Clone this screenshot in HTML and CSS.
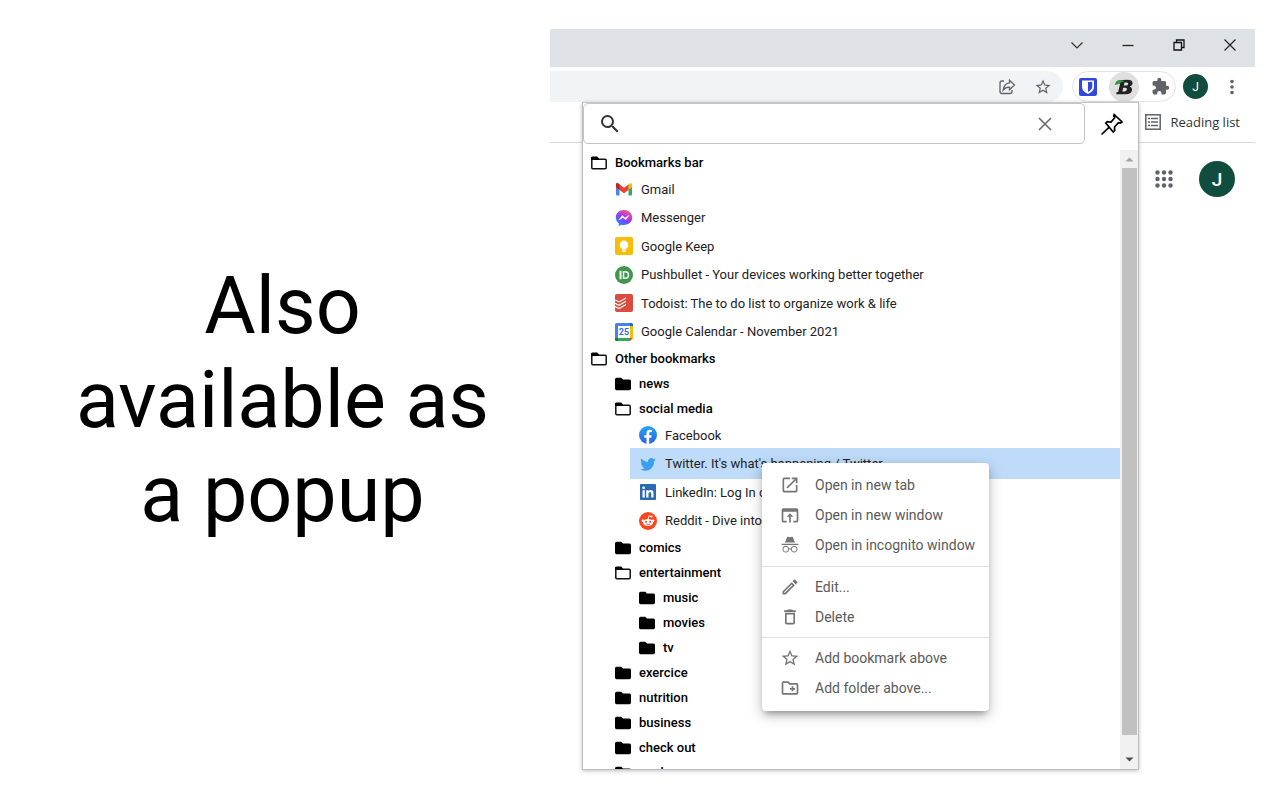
FILE: index.html
```html
<!DOCTYPE html>
<html lang="en">
<head>
<meta charset="utf-8">
<title>Bookmarks popup</title>
<link rel="stylesheet" href="styles.css">
</head>
<body>
<svg class="defs" aria-hidden="true">
  <defs>
    <symbol id="folder-open" viewBox="0 0 16 14"><path d="M1.8 3.2h12.4q1 0 1 1v7.6q0 1-1 1H1.8q-1 0-1-1V2.400z" fill="none" stroke="#111" stroke-width="1.500"/><path d="M.1 3.900V2Q.1.500 1.600.500h4.600L8 2.500v1.400z" fill="#000"/></symbol>
    <symbol id="folder" viewBox="0 0 16 14"><path d="M1.600.800h4.700L8 2.400h6.400q1.600 0 1.600 1.600v7.600q0 1.600-1.600 1.600H1.600Q0 13.200 0 11.600V2.400Q0 .800 1.600.800z"/></symbol>
    <symbol id="star" viewBox="0 0 24 24"><path d="M22 9.240l-7.190-.620L12 2 9.190 8.630 2 9.240l5.460 4.730L5.820 21 12 17.270 18.180 21l-1.630-7.030L22 9.240zM12 15.400l-3.760 2.270 1-4.280-3.320-2.880 4.380-.380L12 6.100l1.710 4.040 4.380.380-3.320 2.880 1 4.280L12 15.400z"/></symbol>
  </defs>
</svg>
<main class="stage">
  <h1 class="headline">Also<br>available as<br>a popup</h1>
  <section class="browser">
    <header class="titlebar">
      <button class="win-btn" aria-label="Search tabs"><svg width="14" height="14" viewBox="0 0 14 14"><path d="M1.500 4.500 7 10l5.500-5.500" fill="none" stroke="#333" stroke-width="1.200"/></svg></button>
      <button class="win-btn" aria-label="Minimize"><svg width="14" height="14" viewBox="0 0 14 14"><path d="M1.500 7.500h11" stroke="#222" stroke-width="1.300"/></svg></button>
      <button class="win-btn" aria-label="Restore"><svg width="14" height="14" viewBox="0 0 14 14"><path d="M2 4.500h7.500V12H2zM4.500 4.500V2H12v7.500H9.500" fill="none" stroke="#111" stroke-width="1.300"/></svg></button>
      <button class="win-btn" aria-label="Close"><svg width="14" height="14" viewBox="0 0 14 14"><path d="m1.500 1.500 11 11m0-11-11 11" stroke="#222" stroke-width="1.200"/></svg></button>
    </header>
    <div class="toolbar">
      <div class="omnibox">
        <button class="icon-btn" aria-label="Share"><svg width="18" height="18" viewBox="0 0 18 18" fill="none" stroke="#5f6368" stroke-width="1.300"><path d="M6 3H4Q2 3 2 5v8.500q0 2 2 2h8q2 0 2-2V12"/><path d="M11.500 2.300 16.500 7l-5 4.700V9.200Q7.500 9 5.200 12 6 5.300 11.500 4.800z"/></svg></button>
        <button class="icon-btn" aria-label="Bookmark this tab"><svg width="18" height="18" fill="#5f6368"><use href="#star"/></svg></button>
      </div>
      <div class="extensions">
        <button class="ext" aria-label="Password manager"><svg width="18" height="18" viewBox="0 0 18 18"><rect width="18" height="18" rx="2" fill="#3148e0"/><path d="M3 2.500h12V9q0 4-6 7-6-3-6-7z" fill="#fff"/><path d="M9 4h4.200v5q0 2.700-4.200 5z" fill="#3148e0"/></svg></button>
        <button class="ext ext-active" aria-label="Bookmarks extension"><svg width="20" height="16" viewBox="0 0 20 16"><path d="M4.500 2.200Q8 .8 13 .8q5.600 0 5.600 3.400 0 2.500-2.800 3.500 2.600.8 2.200 3.600-.6 3.900-6.500 3.900H2.200l.5-2.200h1.500L6 5z" fill="#222"/><path d="M10.500 3.500h2.200q1.800 0 1.500 1.500-.3 1.600-2.300 1.600H9.800zM9.200 8.800h2.200q1.800 0 1.500 1.700-.3 1.900-2.500 1.900H8.400z" fill="#dfdfdf"/><path d="M.8 6Q1.500 1 6 .9q3-.1 5 1.600-2.600-.2-4.500 1.400T.8 6z" fill="#3a9347"/></svg></button>
        <button class="ext" aria-label="Extensions"><svg width="19" height="19" viewBox="0 0 24 24" fill="#5f6368"><path d="M20.500 11H19V7c0-1.100-.9-2-2-2h-4V3.500a2.500 2.500 0 0 0-5 0V5H4c-1.100 0-2 .9-2 2v3.800h1.500a2.700 2.700 0 0 1 0 5.400H2V20c0 1.100.9 2 2 2h3.800v-1.500a2.700 2.700 0 0 1 5.400 0V22H17c1.100 0 2-.9 2-2v-4h1.500a2.500 2.500 0 0 0 0-5z"/></svg></button>
      </div>
      <button class="avatar avatar-small" aria-label="Profile">J</button>
      <button class="icon-btn more" aria-label="Menu"><svg width="6" height="18" viewBox="0 0 6 18" fill="#5f6368"><circle cx="3" cy="3.500" r="1.800"/><circle cx="3" cy="9" r="1.800"/><circle cx="3" cy="14.500" r="1.800"/></svg></button>
    </div>
    <div class="bookmark-bar">
      <button class="reading"><svg width="16" height="16" viewBox="0 0 16 16"><rect x=".8" y=".8" width="14.400" height="14.400" fill="none" stroke="#5f6368" stroke-width="1.500"/><path d="M3 4.500h2m1 0h7M3 8h2m1 0h7M3 11.500h2m1 0h7" stroke="#5f6368" stroke-width="1.600"/></svg>Reading list</button>
    </div>
    <div class="page">
      <button class="icon-btn" aria-label="Google apps"><svg width="20" height="20" viewBox="0 0 20 20" fill="#5f6368"><circle cx="3.500" cy="3.500" r="2.200"/><circle cx="10" cy="3.500" r="2.200"/><circle cx="16.500" cy="3.500" r="2.200"/><circle cx="3.500" cy="10" r="2.200"/><circle cx="10" cy="10" r="2.200"/><circle cx="16.500" cy="10" r="2.200"/><circle cx="3.500" cy="16.500" r="2.200"/><circle cx="10" cy="16.500" r="2.200"/><circle cx="16.500" cy="16.500" r="2.200"/></svg></button>
      <button class="avatar avatar-large" aria-label="Account">J</button>
    </div>

    <div class="popup">
      <div class="search-row">
        <div class="search-box">
          <svg width="24" height="24" viewBox="0 0 24 24" fill="#333"><path d="M15.500 14h-.790l-.280-.270A6.470 6.470 0 0 0 16 9.500 6.500 6.500 0 1 0 9.500 16c1.610 0 3.090-.590 4.230-1.570l.270.280v.790l5 4.990L20.490 19l-4.990-5zm-6 0a4.500 4.500 0 1 1 0-9 4.500 4.500 0 0 1 0 9z"/></svg>
          <input class="search" type="text" aria-label="Search bookmarks">
          <button class="icon-btn" aria-label="Clear"><svg width="14" height="14" viewBox="0 0 14 14"><path d="m1 1 12 12m0-12L1 13" stroke="#666" stroke-width="1.500"/></svg></button>
        </div>
        <button class="icon-btn pin" aria-label="Pin"><svg width="24" height="24" viewBox="0 0 24 24" fill="none" stroke="#000" stroke-width="1.700"><path d="M14.200 2.500 22 10l-1.500 1-2-.3-4 4.300.2 3.500-1.500 1.500L5.800 11l1.500-1.300 3.700.300 3.700-4.300-1-1.800zM9 15.300 1.500 22.500"/></svg></button>
      </div>
      <div class="list">
        <ul class="tree">
          <li><button class="folder"><svg width="16" height="14"><use href="#folder-open"/></svg>Bookmarks bar</button>
            <ul class="tree nested">
              <li><a class="bookmark" href="#"><svg width="18" height="18" viewBox="0 0 18 18"><path d="M1 4.500h3.500v11H2q-1 0-1-1z" fill="#4a86f0"/><path d="M13.500 4.500H17v10q0 1-1 1h-2.500z" fill="#34a853"/><path d="M13.500 4.500 15 3.300q2-.8 2 1.500v2.400l-3.500 2.700z" fill="#fbbc04"/><path d="M1 4.800Q1 2.500 3 3.300l6 4.500 4.500-3.300v5.400L9 13.200l-4.500-3.300L1 7.200z" fill="#e84335"/><path d="M1 4.800Q1 2.500 3 3.300l1.500 1.200v5.400L1 7.200z" fill="#c5221f"/></svg>Gmail</a></li>
              <li><a class="bookmark" href="#"><svg width="18" height="18" viewBox="0 0 18 18"><defs><linearGradient id="mg" x1=".2" y1="1" x2=".8" y2="0"><stop stop-color="#0a94ff"/><stop offset=".5" stop-color="#9a35ff"/><stop offset="1" stop-color="#ff5f75"/></linearGradient></defs><path d="M9 1c4.800 0 8.200 3.300 8.200 7.600S13.800 16 9 16q-1.300 0-2.500-.3L3.800 17v-2.600Q.8 12.200.8 8.600C.8 4.300 4.200 1 9 1z" fill="url(#mg)"/><path d="m4.200 10.800 3-4.200L10 9l3.800-2.500-3 4.200L8 8.500z" fill="#fff" stroke="#fff" stroke-width=".6"/></svg>Messenger</a></li>
              <li><a class="bookmark" href="#"><svg width="18" height="18" viewBox="0 0 18 18"><rect width="18" height="18" rx="2" fill="#fbbc04"/><circle cx="9" cy="8" r="4.400" fill="#fff"/><path d="M7 11h4v1.500H7zM7 13.300h4v1.400H7z" fill="#fff"/></svg>Google Keep</a></li>
              <li><a class="bookmark" href="#"><svg width="18" height="18" viewBox="0 0 18 18"><circle cx="9" cy="9" r="9" fill="#3f9849"/><path d="M4.500 4.800h2v8.400h-2z" fill="#fff"/><path d="M8.500 5.700h1.700a3.300 3.300 0 0 1 0 6.600H8.500z" fill="none" stroke="#fff" stroke-width="1.500"/></svg>Pushbullet - Your devices working better together</a></li>
              <li><a class="bookmark" href="#"><svg width="18" height="18" viewBox="0 0 18 18"><rect width="18" height="18" rx="2" fill="#db4c3f"/><path d="m0 6 4 2 7-4M0 9.300l4 2 7-4M0 12.600l4 2 7-4" fill="none" stroke="#fff" stroke-width="1.100"/></svg>Todoist: The to do list to organize work &amp; life</a></li>
              <li><a class="bookmark" href="#"><svg width="18" height="18" viewBox="0 0 18 18"><path d="M0 1.500Q0 0 1.500 0H15v3H3v12H0z" fill="#4a80ee"/><path d="M15 0h1.500Q18 0 18 1.500V3h-3z" fill="#1967d2"/><path d="M15 3h3v12h-3z" fill="#fbbc04"/><path d="M3 15h12v3H3z" fill="#34a853"/><path d="M0 15h3v3H1.500Q0 18 0 16.500z" fill="#188038"/><path d="M15 15h3l-3 3z" fill="#ea4335"/><path d="M3 3h12v12H3z" fill="#fff"/><text x="9" y="12" text-anchor="middle" class="cal-day">25</text></svg>Google Calendar - November 2021</a></li>
            </ul>
          </li>
          <li><button class="folder"><svg width="16" height="14"><use href="#folder-open"/></svg>Other bookmarks</button>
            <ul class="tree nested">
              <li><button class="folder"><svg width="16" height="14"><use href="#folder"/></svg>news</button></li>
              <li><button class="folder"><svg width="16" height="14"><use href="#folder-open"/></svg>social media</button>
                <ul class="tree nested">
                  <li><a class="bookmark" href="#"><svg width="18" height="18" viewBox="0 0 18 18"><defs><linearGradient id="fg" x2="0" y2="1"><stop stop-color="#2aa4f4"/><stop offset="1" stop-color="#2962e8"/></linearGradient></defs><circle cx="9" cy="9" r="9" fill="url(#fg)"/><path d="M7.500 18v-6.200H5.300V9.200h2.200V7.300q0-3.600 3.400-3.600l1.900.2v2.200h-1.100q-1.500 0-1.500 1.400v1.700h2.500l-.5 2.600h-2V18z" fill="#fff"/></svg>Facebook</a></li>
                  <li><a class="bookmark selected" href="#"><svg width="18" height="18" viewBox="0 0 24 24" fill="#3d9df0"><path d="M22.460 6c-.770.350-1.600.580-2.460.690.880-.530 1.560-1.370 1.880-2.380-.830.500-1.750.850-2.720 1.050A4.260 4.260 0 0 0 12 9.240C8.280 9.090 5.110 7.380 3 4.790c-.370.630-.580 1.370-.580 2.150 0 1.490.750 2.810 1.910 3.560-.710 0-1.370-.200-1.950-.500a4.300 4.300 0 0 0 3.440 4.240 4.220 4.220 0 0 1-1.930.070 4.280 4.280 0 0 0 4 2.980A8.520 8.520 0 0 1 1.500 19.050 12.060 12.060 0 0 0 8.120 21c7.780 0 12.230-6.560 11.990-12.400A8.360 8.360 0 0 0 22.460 6z"/></svg>Twitter. It's what's happening / Twitter</a></li>
                  <li><a class="bookmark" href="#"><svg width="18" height="18" viewBox="0 0 18 18"><rect x="1" y="1" width="16" height="16" rx="1" fill="#2a6ab2"/><path d="M3.500 7.200h2.300v7.300H3.500zM7.200 7.200h2.200v1q.8-1.200 2.300-1.200 2.800 0 2.800 3.200v4.300h-2.300v-3.900q0-1.600-1.200-1.600-1.500 0-1.500 1.700v3.800H7.200z" fill="#fff"/><circle cx="4.650" cy="4.800" r="1.350" fill="#fff"/></svg>LinkedIn: Log In or Sign Up</a></li>
                  <li><a class="bookmark" href="#"><svg width="18" height="18" viewBox="0 0 18 18"><circle cx="9" cy="9" r="9" fill="#fc471e"/><ellipse cx="9" cy="10.500" rx="5" ry="3.600" fill="#fff"/><circle cx="4" cy="8.800" r="1.300" fill="#fff"/><circle cx="14" cy="8.800" r="1.300" fill="#fff"/><circle cx="12.500" cy="4.500" r="1.100" fill="#fff"/><path d="m9 7.500.8-3.600 2.500.6" stroke="#fff" stroke-width=".8" fill="none"/><circle cx="7" cy="9.800" r="1" fill="#fc471e"/><circle cx="11" cy="9.800" r="1" fill="#fc471e"/><path d="M7 12q2 1.300 4 0" stroke="#fc471e" stroke-width=".8" fill="none"/></svg>Reddit - Dive into anything</a></li>
                </ul>
              </li>
              <li><button class="folder"><svg width="16" height="14"><use href="#folder"/></svg>comics</button></li>
              <li><button class="folder"><svg width="16" height="14"><use href="#folder-open"/></svg>entertainment</button>
                <ul class="tree nested">
                  <li><button class="folder"><svg width="16" height="14"><use href="#folder"/></svg>music</button></li>
                  <li><button class="folder"><svg width="16" height="14"><use href="#folder"/></svg>movies</button></li>
                  <li><button class="folder"><svg width="16" height="14"><use href="#folder"/></svg>tv</button></li>
                </ul>
              </li>
              <li><button class="folder"><svg width="16" height="14"><use href="#folder"/></svg>exercice</button></li>
              <li><button class="folder"><svg width="16" height="14"><use href="#folder"/></svg>nutrition</button></li>
              <li><button class="folder"><svg width="16" height="14"><use href="#folder"/></svg>business</button></li>
              <li><button class="folder"><svg width="16" height="14"><use href="#folder"/></svg>check out</button></li>
              <li><button class="folder"><svg width="16" height="14"><use href="#folder"/></svg>work</button></li>
            </ul>
          </li>
        </ul>
        <div class="scrollbar" aria-hidden="true">
          <svg width="17" height="18" viewBox="0 0 17 18"><path d="M4.500 11.500h8l-4-4z" fill="#a3a3a3"/></svg>
          <div class="thumb"></div>
          <svg width="17" height="18" viewBox="0 0 17 18"><path d="M4.500 6.500h8l-4 4z" fill="#505050"/></svg>
        </div>
      </div>
    </div>

    <div class="menu" role="menu">
      <button class="item" role="menuitem"><svg width="20" height="20" viewBox="0 0 24 24"><path d="M19 19H5V5h7V3H5a2 2 0 0 0-2 2v14a2 2 0 0 0 2 2h14c1.100 0 2-.9 2-2v-7h-2v7zM14 3v2h3.590l-9.830 9.830 1.410 1.410L19 6.410V10h2V3h-7z"/></svg>Open in new tab</button>
      <button class="item" role="menuitem"><svg width="20" height="20" viewBox="0 0 24 24"><path d="M20 4H4a2 2 0 0 0-2 2v13a2 2 0 0 0 2 2h4v-2H4V8h16v11h-4v2h4a2 2 0 0 0 2-2V6a2 2 0 0 0-2-2zm-8 6-4 4h3v7h2v-7h3l-4-4z"/></svg>Open in new window</button>
      <button class="item" role="menuitem"><svg width="20" height="20" viewBox="0 0 24 24"><path d="M17.060 13c-1.860 0-3.420 1.330-3.820 3.100-.950-.410-1.820-.300-2.480-.010C10.350 14.310 8.790 13 6.940 13 4.770 13 3 14.790 3 17s1.770 4 3.940 4c2.060 0 3.740-1.620 3.900-3.680.340-.240 1.230-.690 2.320.020C13.340 19.390 15 21 17.060 21 19.230 21 21 19.210 21 17s-1.770-4-3.940-4M6.940 19.860c-1.560 0-2.810-1.280-2.810-2.860s1.260-2.860 2.810-2.860c1.560 0 2.810 1.280 2.810 2.860s-1.250 2.860-2.810 2.860m10.120 0c-1.560 0-2.810-1.280-2.810-2.860s1.250-2.860 2.810-2.860 2.820 1.280 2.820 2.860-1.270 2.860-2.820 2.860M22 10.500H2V12h20v-1.500M15.530 2.630a.990.990 0 0 0-1.250-.590L12 2.790l-2.290-.750-.050-.010a.990.990 0 0 0-1.210.640L6 9h12l-2.440-6.320-.03-.05z"/></svg>Open in incognito window</button>
      <hr class="sep">
      <button class="item" role="menuitem"><svg width="20" height="20" viewBox="0 0 24 24"><path d="M14.060 9.020l.920.920L5.920 19H5v-.920l9.060-9.060M17.660 3c-.250 0-.510.100-.700.290l-1.830 1.830 3.750 3.750 1.830-1.830a1 1 0 0 0 0-1.410l-2.340-2.340c-.200-.200-.450-.290-.710-.290zm-3.600 3.190L3 17.250V21h3.750L17.810 9.940l-3.750-3.750z"/></svg>Edit...</button>
      <button class="item" role="menuitem"><svg width="20" height="20" viewBox="0 0 24 24"><path d="M6 19c0 1.100.9 2 2 2h8c1.100 0 2-.9 2-2V7H6v12zM8 9h8v10H8V9zm7.500-5-1-1h-5l-1 1H5v2h14V4h-3.500z"/></svg>Delete</button>
      <hr class="sep">
      <button class="item" role="menuitem"><svg width="20" height="20"><use href="#star"/></svg>Add bookmark above</button>
      <button class="item" role="menuitem"><svg width="20" height="20" viewBox="0 0 24 24"><path d="M20 6h-8l-2-2H4a2 2 0 0 0-2 2v12c0 1.100.9 2 2 2h16c1.100 0 2-.9 2-2V8c0-1.100-.9-2-2-2zm0 12H4V6h5.170l2 2H20v10zm-8-4h2v2h2v-2h2v-2h-2v-2h-2v2h-2v2z"/></svg>Add folder above...</button>
    </div>
  </section>
</main>
</body>
</html>
```

FILE: styles.css
```css
* { box-sizing: border-box; }
body { margin: 0; background: #fff; color: #000; font-family: Roboto, sans-serif; }
button { border: 0; padding: 0; background: none; font: inherit; color: inherit; }
svg { display: block; flex: none; }
.defs { position: absolute; width: 0; height: 0; }

.stage { display: grid; grid-template-columns: 550px 1fr; min-height: 100vh; padding-right: 25px; }
.headline { margin: 0; padding-left: 15px; align-self: center; text-align: center; font-size: 79px; line-height: 94px; font-weight: 400; }

.browser { position: relative; margin-top: 29px; }
.titlebar { display: flex; justify-content: flex-end; height: 38px; padding-bottom: 7px; background: #dee1e6; }
.win-btn { display: grid; place-items: center; width: 51px; }
.toolbar { display: flex; align-items: center; height: 35px; padding-top: 4px; }
.omnibox { display: flex; align-items: center; justify-content: flex-end; gap: 18px; flex: 1; height: 31px; padding-right: 11px; background: #f1f3f4; border-radius: 0 16px 16px 0; }
.icon-btn { display: grid; place-items: center; }
.extensions { display: flex; align-items: center; gap: 6px; height: 31px; margin-left: 9px; border: 1px solid #e0e2e4; border-radius: 16px; }
.ext { display: grid; place-items: center; width: 30px; height: 30px; border-radius: 50%; }
.ext-active { background: #dfdfdf; }
.avatar { display: grid; place-items: center; border-radius: 50%; background: #104d3e; color: #fff; }
.avatar-small { width: 25px; height: 25px; margin-left: 7px; font-size: 12px; }
.avatar-large { width: 36px; height: 36px; font-size: 19px; font-weight: 500; }
.more { width: 47px; }
.bookmark-bar { display: flex; align-items: center; justify-content: flex-end; height: 41px; padding-right: 15px; border-bottom: 1px solid #d9d9d9; }
.reading { display: flex; align-items: center; gap: 9px; font: 13px "Open Sans", sans-serif; color: #333; }
.page { display: flex; align-items: center; justify-content: flex-end; gap: 25px; padding: 18px 20px; }

.popup { position: absolute; top: 73px; right: 116px; bottom: 30px; left: 32px; display: flex; flex-direction: column; background: #fff; border: 1px solid #bdbdbd; border-top-color: #c8c8c8; box-shadow: 0 1px 4px rgba(0, 0, 0, .25); }
.search-row { display: flex; height: 47px; flex: none; align-items: flex-start; }
.search-box { display: flex; align-items: center; flex: 1; height: 41px; padding: 0 32px 0 14px; border: 1px solid #c4c4c4; border-radius: 5px; }
.search { flex: 1; min-width: 0; border: 0; outline: 0; background: none; font: 14px Roboto, sans-serif; }
.pin { width: 53px; height: 41px; }
.list { display: flex; flex: 1; min-height: 0; }
.list > .tree { flex: 1; overflow: hidden; }
.tree { margin: 0; padding: 0; list-style: none; }
.nested { padding-left: 24px; }
.folder { display: flex; align-items: center; gap: 8px; width: 100%; height: 25px; padding-left: 8px; font-size: 13px; font-weight: 500; text-align: left; white-space: nowrap; }
.bookmark { display: flex; align-items: center; gap: 8px; height: 28px; padding-left: 8px; font-size: 13px; color: #222; text-decoration: none; white-space: nowrap; }
li:nth-child(even) > .bookmark { height: 29px; }
.selected { background: #bedbf9; outline: 1px solid #bedbf9; }
.cal-day { font: 700 9px Roboto, sans-serif; fill: #2f6fe0; }
.scrollbar { display: flex; flex-direction: column; align-items: center; width: 18px; background: #f1f1f1; }
.thumb { flex: 1; width: 15px; margin-bottom: 16px; background: #c1c1c1; }

.menu { position: absolute; top: 434px; left: 212px; width: 227px; padding: 7px 0 8px; background: #fff; border-radius: 4px; box-shadow: 0 5px 6px -3px rgba(0, 0, 0, .3), 0 4px 14px rgba(0, 0, 0, .25); }
.item { display: flex; align-items: center; gap: 15px; width: 100%; height: 30px; padding-left: 18px; font-size: 14px; color: #5a5a5a; text-align: left; white-space: nowrap; }
.item svg { fill: #757575; }
.sep { margin: 6px 0 5px; border: 0; border-top: 1px solid #dedede; }
.sep ~ .sep { margin-top: 5px; }
```
